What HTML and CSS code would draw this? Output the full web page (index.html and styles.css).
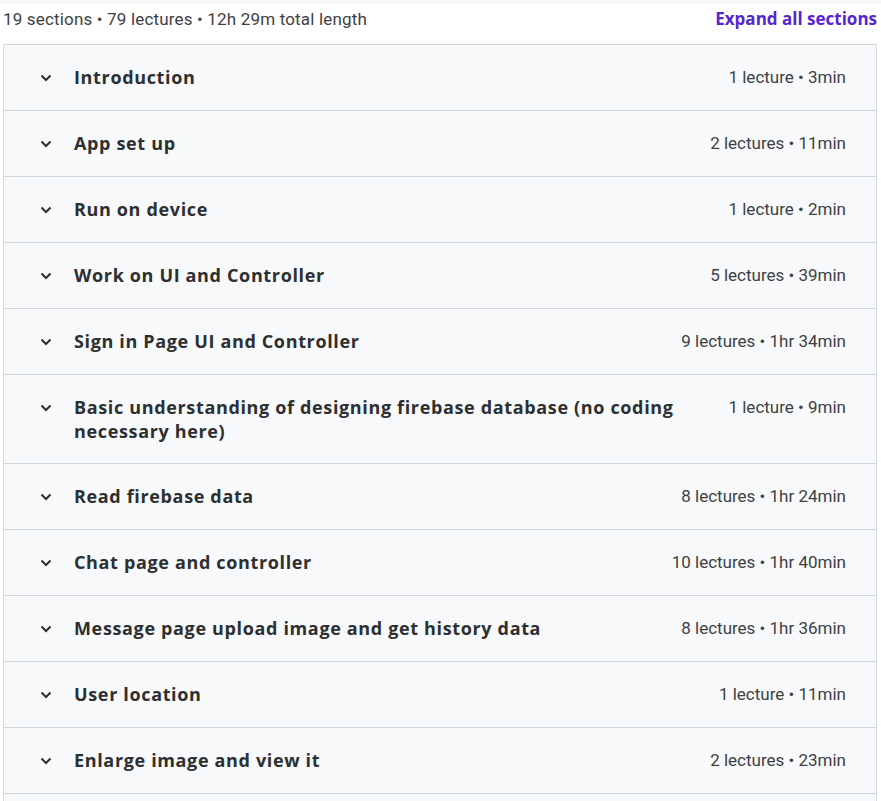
FILE: index.html
```html
<!DOCTYPE html>
<html>
<head>
<meta charset="utf-8">
<link rel="stylesheet" href="styles.css">
</head>
<body>
<div class="topstrip"></div>
<div class="page">
  <div class="summary">
    <span class="counts">19 sections • 79 lectures • 12h 29m total length</span>
    <button class="expand">Expand all sections</button>
  </div>
  <div class="curriculum">
    <div class="section"><svg class="chev" viewBox="0 0 12 8"><path d="M1.5 1.5 6 6l4.5-4.5"/></svg><span class="title">Introduction</span><span class="meta">1 lecture • 3min</span></div>
    <div class="section"><svg class="chev" viewBox="0 0 12 8"><path d="M1.5 1.5 6 6l4.5-4.5"/></svg><span class="title">App set up</span><span class="meta">2 lectures • 11min</span></div>
    <div class="section"><svg class="chev" viewBox="0 0 12 8"><path d="M1.5 1.5 6 6l4.5-4.5"/></svg><span class="title">Run on device</span><span class="meta">1 lecture • 2min</span></div>
    <div class="section"><svg class="chev" viewBox="0 0 12 8"><path d="M1.5 1.5 6 6l4.5-4.5"/></svg><span class="title">Work on UI and Controller</span><span class="meta">5 lectures • 39min</span></div>
    <div class="section"><svg class="chev" viewBox="0 0 12 8"><path d="M1.5 1.5 6 6l4.5-4.5"/></svg><span class="title">Sign in Page UI and Controller</span><span class="meta">9 lectures • 1hr 34min</span></div>
    <div class="section"><svg class="chev" viewBox="0 0 12 8"><path d="M1.5 1.5 6 6l4.5-4.5"/></svg><span class="title">Basic understanding of designing firebase database (no coding necessary here)</span><span class="meta">1 lecture • 9min</span></div>
    <div class="section"><svg class="chev" viewBox="0 0 12 8"><path d="M1.5 1.5 6 6l4.5-4.5"/></svg><span class="title">Read firebase data</span><span class="meta">8 lectures • 1hr 24min</span></div>
    <div class="section"><svg class="chev" viewBox="0 0 12 8"><path d="M1.5 1.5 6 6l4.5-4.5"/></svg><span class="title">Chat page and controller</span><span class="meta">10 lectures • 1hr 40min</span></div>
    <div class="section"><svg class="chev" viewBox="0 0 12 8"><path d="M1.5 1.5 6 6l4.5-4.5"/></svg><span class="title">Message page upload image and get history data</span><span class="meta">8 lectures • 1hr 36min</span></div>
    <div class="section"><svg class="chev" viewBox="0 0 12 8"><path d="M1.5 1.5 6 6l4.5-4.5"/></svg><span class="title">User location</span><span class="meta">1 lecture • 11min</span></div>
    <div class="section"><svg class="chev" viewBox="0 0 12 8"><path d="M1.5 1.5 6 6l4.5-4.5"/></svg><span class="title">Enlarge image and view it</span><span class="meta">2 lectures • 23min</span></div>
    <div class="section"><svg class="chev" viewBox="0 0 12 8"><path d="M1.5 1.5 6 6l4.5-4.5"/></svg><span class="title">Video and voice call</span><span class="meta">6 lectures • 1hr 2min</span></div>
  </div>
</div>
</body>
</html>
```
FILE: styles.css
```css
html, body {
  margin: 0;
  padding: 0;
  background: #ffffff;
  color: #2d2f31;
  font-family: "Roboto", "Liberation Sans", sans-serif;
  overflow: hidden;
}
.topstrip {
  height: 4px;
  background: #f7f7f7;
}
.page {
  padding: 0 4px 0 3px;
}
.summary {
  display: flex;
  justify-content: space-between;
  align-items: center;
  height: 29px;
  margin-bottom: 11px;
}
.counts {
  font-size: 17px;
  letter-spacing: 0.17px;
  color: #3e4143;
}
.expand {
  border: 0;
  background: none;
  padding: 0;
  font-family: "Open Sans", sans-serif;
  font-weight: 700;
  font-size: 17px;
  letter-spacing: 0;
  color: #5624d0;
}
.curriculum {
  border: 1px solid #d1d7dc;
  border-bottom: 0;
}
.section {
  display: flex;
  align-items: flex-start;
  padding: 20px 30px 20px 36px;
  min-height: 25px;
  background: #f7f9fa;
  border-bottom: 1px solid #d1d7dc;
}
.chev {
  width: 12px;
  height: 8px;
  flex: none;
  margin-top: 9px;
  margin-right: 22px;
  fill: none;
  stroke: #2d2f31;
  stroke-width: 2;
}
.title {
  flex: 1;
  font-family: "Open Sans", sans-serif;
  font-weight: 700;
  font-size: 18px;
  letter-spacing: 0.65px;
  line-height: 24px;
  color: #2d2f31;
  padding-right: 40px;
}
.meta {
  font-size: 17px;
  line-height: 24px;
  color: #3e4143;
  white-space: nowrap;
}
```
